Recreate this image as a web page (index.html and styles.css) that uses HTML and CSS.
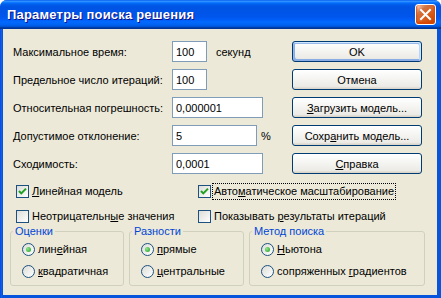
FILE: index.html
```html
<!DOCTYPE html>
<html lang="ru">
<head>
<meta charset="utf-8">
<title>Параметры поиска решения</title>
<link rel="stylesheet" href="styles.css">
</head>
<body>
<div class="window">
  <div class="titlebar">
    <span class="title">Параметры поиска решения</span>
    <div class="close">
      <svg width="13" height="13" viewBox="0 0 13 13"><path d="M2 2 L11 11 M11 2 L2 11" stroke="#fff" stroke-width="2" stroke-linecap="square"/></svg>
    </div>
  </div>
  <div class="client">
    <div class="top">
      <div class="fields">
        <div class="row"><span class="lbl">Максимальное время:</span><div class="input w35">100</div><span class="unit">секунд</span></div>
        <div class="row"><span class="lbl">Предельное число итераций:</span><div class="input w35">100</div></div>
        <div class="row"><span class="lbl">Относительная погрешность:</span><div class="input w91">0,000001</div></div>
        <div class="row"><span class="lbl">Допустимое отклонение:</span><div class="input w85">5</div><span class="pct">%</span></div>
        <div class="row"><span class="lbl">Сходимость:</span><div class="input w91">0,0001</div></div>
      </div>
      <div class="buttons">
        <div class="btn default">OK</div>
        <div class="btn">Отмена</div>
        <div class="btn"><span><u>З</u>агрузить модель...</span></div>
        <div class="btn"><span>Сохр<u>а</u>нить модель...</span></div>
        <div class="btn"><span><u>С</u>правка</span></div>
      </div>
    </div>
    <div class="checks">
      <div class="check"><span class="box on"><svg width="11" height="11" viewBox="0 0 11 11"><path d="M2 5 L4.3 7.4 L9 2.6" fill="none" stroke="#21a121" stroke-width="2"/></svg></span><span class="txt"><u>Л</u>инейная модель</span></div>
      <div class="check"><span class="box on"><svg width="11" height="11" viewBox="0 0 11 11"><path d="M2 5 L4.3 7.4 L9 2.6" fill="none" stroke="#21a121" stroke-width="2"/></svg></span><span class="txt focus">Авто<u>м</u>атическое масштабирование</span></div>
      <div class="check"><span class="box"></span><span class="txt">Неотрицательн<u>ы</u>е значения</span></div>
      <div class="check"><span class="box"></span><span class="txt">Показывать <u>р</u>езультаты итераций</span></div>
    </div>
    <div class="groups">
      <fieldset class="group g1">
        <legend>Оценки</legend>
        <div class="opts">
          <div class="opt"><span class="radio on"></span><span class="txt">лин<u>е</u>йная</span></div>
          <div class="opt"><span class="radio"></span><span class="txt"><u>к</u>вадратичная</span></div>
        </div>
      </fieldset>
      <fieldset class="group g2">
        <legend>Разности</legend>
        <div class="opts">
          <div class="opt"><span class="radio on"></span><span class="txt"><u>п</u>рямые</span></div>
          <div class="opt"><span class="radio"></span><span class="txt"><u>ц</u>ентральные</span></div>
        </div>
      </fieldset>
      <fieldset class="group g3">
        <legend>Метод поиска</legend>
        <div class="opts">
          <div class="opt"><span class="radio on"></span><span class="txt"><u>Н</u>ьютона</span></div>
          <div class="opt"><span class="radio"></span><span class="txt">сопряженных <u>г</u>радиентов</span></div>
        </div>
      </fieldset>
    </div>
  </div>
</div>
</body>
</html>
```
FILE: styles.css
```css
* { box-sizing: border-box; }
html, body { margin: 0; padding: 0; }
body {
  width: 441px;
  height: 298px;
  overflow: hidden;
  background: #ffffff;
  font-family: "Liberation Sans", Arial, sans-serif;
  font-size: 11px;
  color: #000;
}
.window {
  width: 441px;
  height: 298px;
  display: flex;
  flex-direction: column;
  border-radius: 7px 7px 0 0;
  overflow: hidden;
  background: linear-gradient(90deg, #0831d9 0, #166aee 1px, #0855dd 2px, #0855dd 100%);
}
.titlebar {
  height: 29px;
  flex: none;
  display: flex;
  align-items: center;
  justify-content: space-between;
  padding: 0 5px 0 7px;
  background: linear-gradient(180deg, #0058ee 0%, #3593ff 4%, #288eff 6%, #127dff 8%, #036ffc 10%, #0262ee 14%, #0057e5 20%, #0054e3 24%, #0055eb 56%, #005bf5 66%, #026afe 76%, #0062ef 86%, #0052d6 92%, #0040ab 94%, #003092 100%);
}
.title {
  color: #fff;
  font-weight: bold;
  font-size: 13px;
  letter-spacing: 0.2px;
  text-shadow: 1px 1px #0f1089;
}
.close {
  width: 21px;
  height: 21px;
  border: 1px solid #fff;
  border-radius: 3px;
  background: radial-gradient(circle at 90% 90%, #cc4600 0, #dc6527 55%, #cd7546 70%, #ffccb2 90%, #fff 100%);
  box-shadow: inset 0 -1px 2px 1px #da4600;
  display: flex;
  align-items: center;
  justify-content: center;
}
.client {
  flex: 1;
  margin: 0 4px 3px 3px;
  background: #ece9d8;
  padding-top: 12px;
}
.top {
  display: flex;
  padding-left: 10px;
}
.fields {
  width: 279px;
  display: flex;
  flex-direction: column;
  gap: 7px;
}
.row {
  display: flex;
  align-items: center;
  height: 21px;
}
.lbl { width: 159px; flex: none; }
.input {
  height: 21px;
  border: 1px solid #7f9db9;
  background: #fff;
  padding: 0 3px;
  display: flex;
  align-items: center;
}
.w35 { width: 35px; }
.w85 { width: 85px; }
.w91 { width: 91px; }
.unit { margin-left: 9px; }
.pct { margin-left: 4px; }
.buttons {
  width: 130px;
  display: flex;
  flex-direction: column;
  gap: 7px;
}
.btn {
  height: 21px;
  border: 1px solid #003c74;
  border-radius: 3px;
  background: linear-gradient(180deg, #fff, #ecebe6 86%, #d6d0c5);
  display: flex;
  align-items: center;
  justify-content: center;
}
.btn.default {
  box-shadow: inset -1px 1px #cee7ff, inset 1px 2px #98b8ea, inset -2px 2px #bcd4f6, inset 1px -1px #89ade4, inset 2px -2px #89ade4;
}
.checks {
  display: grid;
  grid-template-columns: 182px auto;
  grid-auto-rows: 17px;
  row-gap: 8px;
  padding-left: 13px;
  margin-top: 9px;
}
.check, .opt {
  display: flex;
  align-items: center;
  gap: 1px;
}
.box {
  width: 13px;
  height: 13px;
  flex: none;
  border: 1px solid #1c5180;
  background: linear-gradient(135deg, #dcdcd7, #fff);
  display: flex;
  align-items: center;
  justify-content: center;
}
.txt {
  border: 1px dotted transparent;
  padding: 1px 1px;
  line-height: 13px;
}
.txt.focus { border-color: #000; }
.groups {
  display: flex;
  gap: 5px;
  padding-left: 7px;
}
.group {
  display: block;
  margin: 0;
  height: 61px;
  border: 1px solid #d0d0bf;
  border-radius: 3px;
  padding: 3px 0 0 11px;
  min-width: 0;
}
.group legend {
  color: #0046d5;
  padding: 0 2px;
  margin: 0 0 0 -9px;
  line-height: 13px;
}
.opts {
  display: flex;
  flex-direction: column;
  gap: 5px;
}
.g1 { width: 114px; }
.g2 { width: 115px; }
.g3 { width: 176px; }
.opt { height: 17px; }
.radio {
  width: 13px;
  height: 13px;
  flex: none;
  border-radius: 50%;
  border: 1px solid #1c5180;
  background: linear-gradient(135deg, #dcdcd7, #fff);
  display: flex;
  align-items: center;
  justify-content: center;
}
.radio.on::after {
  content: "";
  width: 5px;
  height: 5px;
  border-radius: 50%;
  background: radial-gradient(circle at 35% 35%, #8ee88e, #1f9a1f);
}
```
